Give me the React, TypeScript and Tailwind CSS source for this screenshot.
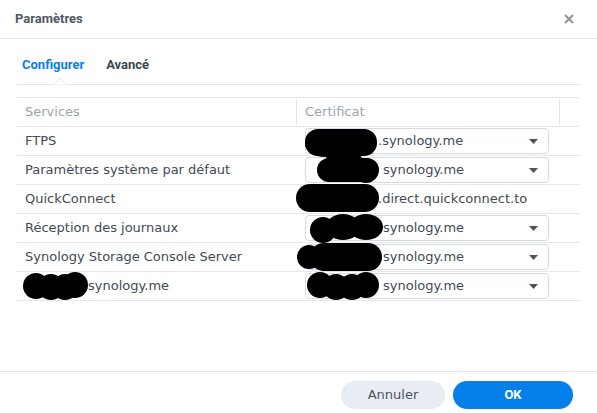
type Row = {
  service: string;
  cert: string;
  select: boolean;
};

const rows: Row[] = [
  { service: "FTPS", cert: ".synology.me", select: true },
  { service: "Paramètres système par défaut", cert: "synology.me", select: true },
  { service: "QuickConnect", cert: ".direct.quickconnect.to", select: false },
  { service: "Réception des journaux", cert: "synology.me", select: true },
  { service: "Synology Storage Console Server", cert: "synology.me", select: true },
  { service: "", cert: "synology.me", select: true },
];

// scribbled-out hostnames, drawn per row
function Redaction({ index }: { index: number }) {
  if (index === 0)
    return (
      <svg className="absolute left-[8px] top-[1px] h-[30px] w-[74px]" viewBox="0 0 74 30">
        <rect x="0" y="1" width="72" height="27" rx="13" fill="#000" />
        <ellipse cx="20" cy="15" rx="20" ry="14" fill="#000" />
      </svg>
    );
  if (index === 1)
    return (
      <svg className="absolute left-[19px] top-[-7px] h-[34px] w-[66px]" viewBox="0 0 66 34">
        <ellipse cx="28" cy="10" rx="18" ry="9" fill="#000" />
        <rect x="1" y="9" width="62" height="24" rx="12" fill="#000" />
        <circle cx="50" cy="22" r="12" fill="#000" />
      </svg>
    );
  if (index === 2)
    return (
      <svg className="absolute left-[-1px] top-[-1px] h-[30px] w-[84px]" viewBox="0 0 84 30">
        <rect x="0" y="0" width="83" height="28" rx="14" fill="#000" />
      </svg>
    );
  if (index === 3)
    return (
      <svg className="absolute left-[13px] top-[0px] h-[30px] w-[74px]" viewBox="0 0 74 30">
        <circle cx="13" cy="16" r="13" fill="#000" />
        <ellipse cx="33" cy="13" rx="17" ry="13" fill="#000" />
        <ellipse cx="56" cy="13" rx="17" ry="13" fill="#000" />
      </svg>
    );
  if (index === 4)
    return (
      <svg className="absolute left-[0px] top-[0px] h-[30px] w-[86px]" viewBox="0 0 86 30">
        <circle cx="12" cy="14" r="12" fill="#000" />
        <rect x="13" y="0" width="72" height="28" rx="14" fill="#000" />
      </svg>
    );
  return (
    <svg className="absolute left-[9px] top-[0px] h-[30px] w-[76px]" viewBox="0 0 76 30">
      <circle cx="14" cy="13" r="13" fill="#000" />
      <circle cx="30" cy="15" r="13" fill="#000" />
      <circle cx="46" cy="15" r="13" fill="#000" />
      <circle cx="60" cy="13" r="13" fill="#000" />
    </svg>
  );
}

function Caret() {
  return (
    <svg className="h-[5px] w-[9px]" viewBox="0 0 9 5">
      <path d="M0 0 H9 L4.5 5 Z" fill="#4b535c" />
    </svg>
  );
}

export default function App() {
  return (
    <div className="flex h-[413px] w-[597px] flex-col bg-white font-['DejaVu_Sans',sans-serif] text-[#414b55]">
      <header className="flex h-[39px] items-center justify-between border-b border-[#e3e8ee] pl-[15px] pr-[23px]">
        <span className="font-['Roboto',sans-serif] text-[13px] font-bold text-[#4f5863]">Paramètres</span>
        <svg className="h-[10px] w-[10px]" viewBox="0 0 10 10">
          <path d="M1 1 L9 9 M9 1 L1 9" stroke="#8c939b" strokeWidth="2" />
        </svg>
      </header>

      <main className="flex-1 px-[17px]">
        <div className="relative flex h-[46px] items-start gap-[22px] border-b border-[#e3e8ee] pl-[5px] pt-[19px] font-['Roboto',sans-serif] text-[13px] font-bold leading-[14px]">
          <span className="text-[#057feb]">Configurer</span>
          <span className="text-[#3d4750]">Avancé</span>
          <svg className="absolute bottom-[-1px] left-[36px] h-[7px] w-[14px]" viewBox="0 0 14 7">
            <path d="M0 6.5 L7 0.5 L14 6.5" fill="#fff" stroke="#e3e8ee" />
          </svg>
        </div>

        <div className="mt-[12px] text-[13px]">
          <div className="flex h-[30px] border-y border-[#e3e8ee] text-[#9ba3ad]">
            <div className="flex w-[280px] items-center border-r border-[#e3e8ee] pl-[8px]">Services</div>
            <div className="flex w-[263px] items-center border-r border-[#e3e8ee] pl-[8px]">Certificat</div>
            <div className="flex-1" />
          </div>
          {rows.map((row, i) => (
            <div key={i} className="flex h-[29px] border-b border-[#e3e8ee]">
              <div className="relative flex w-[280px] items-center pl-[8px]">
                {row.service ? (
                  row.service
                ) : (
                  <>
                    <svg className="absolute left-[6px] top-[0px] h-[30px] w-[66px]" viewBox="0 0 66 30">
                      <circle cx="13" cy="14" r="13" fill="#000" />
                      <circle cx="28" cy="15" r="13" fill="#000" />
                      <circle cx="42" cy="15" r="13" fill="#000" />
                      <circle cx="52" cy="13" r="13" fill="#000" />
                    </svg>
                    <span className="pl-[63px]">synology.me</span>
                  </>
                )}
              </div>
              <div className="relative flex w-[263px] items-center pl-[8px]">
                {row.select ? (
                  <div className="flex h-[26px] w-[244px] items-center justify-between rounded-[4px] border border-[#d5dbe2] pr-[10px]">
                    <span className={row.cert.startsWith(".") ? "pl-[72px]" : "pl-[77px]"}>{row.cert}</span>
                    <Caret />
                  </div>
                ) : (
                  <span className="pl-[73px]">{row.cert}</span>
                )}
                <Redaction index={i} />
              </div>
              <div className="flex-1" />
            </div>
          ))}
        </div>
      </main>

      <footer className="flex h-[42px] items-start justify-end gap-[8px] border-t border-[#e3e8ee] pr-[24px] pt-[9px] text-[13px]">
        <button className="h-[28px] w-[104px] rounded-full bg-[#e8edf4] text-[#4b535c]">Annuler</button>
        <button className="h-[28px] w-[120px] rounded-full bg-[#057feb] font-['Roboto',sans-serif] font-bold text-white">OK</button>
      </footer>
    </div>
  );
}
